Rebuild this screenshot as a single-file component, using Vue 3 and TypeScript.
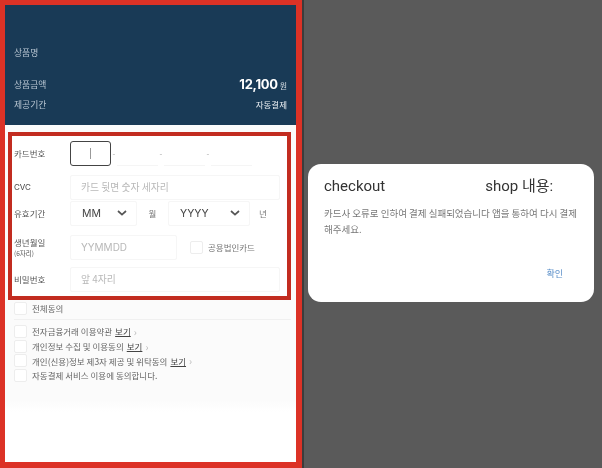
<script setup lang="ts">
interface Term { text: string; link: boolean }
const terms: Term[] = [
  { text: '전자금융거래 이용약관', link: true },
  { text: '개인정보 수집 및 이용동의', link: true },
  { text: '개인(신용)정보 제3자 제공 및 위탁동의', link: true },
  { text: '자동결제 서비스 이용에 동의합니다.', link: false },
]
</script>

<template>
  <div class="screen">
    <section class="pay">
      <header class="summary">
        <div class="product">상품명</div>
        <div class="line price-line">
          <span>상품금액</span>
          <span class="price"><b>12,100</b> <small>원</small></span>
        </div>
        <div class="line period-line">
          <span>제공기간</span>
          <span class="auto">자동결제</span>
        </div>
      </header>

      <div class="form-frame">
        <div class="row card-row">
          <label class="lbl">카드번호</label>
          <div class="card-fields">
            <div class="card-cell focused"><i class="caret"></i></div>
            <span class="dash">-</span>
            <div class="card-cell"></div>
            <span class="dash">-</span>
            <div class="card-cell"></div>
            <span class="dash">-</span>
            <div class="card-cell"></div>
          </div>
        </div>
        <div class="row cvc-row">
          <label class="lbl cvc">CVC</label>
          <div class="field grow ph">카드 뒷면 숫자 세자리</div>
        </div>
        <div class="row exp-row">
          <label class="lbl">유효기간</label>
          <div class="field select mm">
            <span>MM</span>
            <svg width="10" height="6" viewBox="0 0 10 6"><path d="M1 1l4 3.6L9 1" fill="none" stroke="#555" stroke-width="1.7" /></svg>
          </div>
          <span class="unit u1">월</span>
          <div class="field select yy">
            <span>YYYY</span>
            <svg width="10" height="6" viewBox="0 0 10 6"><path d="M1 1l4 3.6L9 1" fill="none" stroke="#555" stroke-width="1.7" /></svg>
          </div>
          <span class="unit u2">년</span>
        </div>
        <div class="row birth-row">
          <label class="lbl two">생년월일<br /><small>(6자리)</small></label>
          <div class="field birth ph">YYMMDD</div>
          <span class="box corp-box"></span>
          <span class="corp">공용법인카드</span>
        </div>
        <div class="row pw-row">
          <label class="lbl">비밀번호</label>
          <div class="field grow ph">앞 4자리</div>
        </div>
      </div>

      <div class="agree">
        <div class="all">
          <span class="box"></span>
          <span>전체동의</span>
        </div>
        <div class="term" v-for="t in terms" :key="t.text">
          <span class="box"></span>
          <span>{{ t.text }}</span>
          <template v-if="t.link"><u>보기</u><em>›</em></template>
        </div>
      </div>
    </section>

    <section class="backdrop">
      <div class="dialog">
        <div class="title">
          <span>checkout</span>
          <span class="shop">shop 내용:</span>
        </div>
        <p class="msg">카드사 오류로 인하여 결제 실패되었습니다 앱을 통하여 다시 결제<br />해주세요.</p>
        <div class="actions"><span>확인</span></div>
      </div>
    </section>
  </div>
</template>

<style>
html, body { margin: 0; padding: 0; background: #5a5a5a; }
</style>

<style scoped>
.screen {
  width: 602px;
  height: 468px;
  display: flex;
  overflow: hidden;
  font-family: "Noto Sans CJK KR", "Noto Sans", sans-serif;
  filter: blur(0.55px);
}
.pay {
  width: 302px;
  height: 468px;
  flex: none;
  box-sizing: border-box;
  border: solid #dc3226;
  border-width: 5px 6px 6px 5px;
  background: linear-gradient(#fbfbfb 0, #fbfbfb 395px, #fff 407px);
  display: flex;
  flex-direction: column;
}
.summary {
  height: 120px;
  flex: none;
  box-sizing: border-box;
  background: #193a56;
  color: #b9c6d2;
  font-size: 8.8px;
  padding: 41px 9px 0 9px;
}
.product { line-height: 13px; }
.line {
  display: flex;
  justify-content: space-between;
  align-items: center;
}
.price-line { margin-top: 17px; height: 16px; }
.period-line { margin-top: 4px; height: 16px; }
.price { color: #fff; }
.price b { font: 700 13px Inter, sans-serif; letter-spacing: -0.3px; }
.price small { font-size: 8px; color: #d5dde4; }
.auto { color: #e8edf1; font-size: 8.5px; }

.form-frame {
  margin: 7px 5px 0 3px;
  flex: none;
  height: 168px;
  box-sizing: border-box;
  border: 4px solid #c22c20;
  background: #fff;
  padding: 0 0 0 2px;
  color: #555;
  display: flex;
  flex-direction: column;
}
.row {
  position: relative;
  display: flex;
  align-items: center;
  font-size: 8.5px;
}
.lbl { width: 56px; flex: none; color: #555; line-height: 10px; }
.lbl.cvc { font: 8px Inter, sans-serif; color: #444; }
.lbl small { font-size: 6.5px; }
.card-row { height: 26px; margin-top: 4px; }
.cvc-row { height: 26px; margin-top: 8px; }
.exp-row { height: 26px; margin-top: 0; }
.birth-row { height: 26px; margin-top: 8px; }
.pw-row { height: 26px; margin-top: 6px; }
.card-fields { display: flex; align-items: center; height: 25px; }
.card-cell { width: 41px; height: 25px; box-sizing: border-box; border-bottom: 1px solid #f5f5f5; }
.card-cell.focused {
  border: 1.5px solid #444;
  border-radius: 3px;
  display: flex;
  align-items: center;
  justify-content: center;
}
.caret { width: 1px; height: 11px; background: #999; }
.dash { width: 6px; color: #aaa; text-align: center; font-size: 8px; }
.field {
  height: 25px;
  box-sizing: border-box;
  border: 1px solid #f6f6f6;
  border-radius: 2px;
  display: flex;
  align-items: center;
  padding-left: 10px;
  background: #fff;
}
.grow { width: 210px; }
.ph { color: #b8b8b8; font-size: 9.8px; }
.select { justify-content: space-between; padding: 0 9px 0 11px; color: #444; font: 10.5px Inter, sans-serif; }
.mm { width: 67px; }
.yy { width: 82px; padding-left: 11px; }
.unit { color: #777; text-align: center; }
.u1 { width: 31px; }
.u2 { width: 26px; }
.birth { width: 107px; font-family: Inter, sans-serif; font-size: 10px; }
.box {
  width: 13px;
  height: 13px;
  flex: none;
  box-sizing: border-box;
  border: 1px solid #ededed;
  border-radius: 2px;
  background: #fff;
  display: inline-block;
}
.corp-box { margin-left: 13px; }
.corp { margin-left: 5px; color: #777; }

.agree { margin: 0 0 0 9px; width: 277px; font-size: 8.5px; color: #666; }
.all {
  display: flex;
  align-items: center;
  gap: 5px;
  height: 16px;
  padding-bottom: 3px;
  border-bottom: 1px solid #f0f0f0;
  margin-bottom: 4px;
}
.term {
  display: flex;
  align-items: center;
  height: 14.7px;
}
.term .box { margin-right: 5px; }
.term u { margin-left: 3px; color: #444; }
.term em { margin-left: 3px; color: #bbb; font-style: normal; font-size: 10px; }

.backdrop {
  flex: 1;
  box-sizing: border-box;
  border-left: 2px solid #3c3c3c;
  background: #5a5a5a;
  padding: 164px 4px 0 4px;
}
.dialog {
  width: 286px;
  height: 138px;
  box-sizing: border-box;
  background: #fff;
  border-radius: 13px;
  padding: 13px 16px 0;
}
.title {
  display: flex;
  font: 15px Roboto, "Noto Sans CJK KR", sans-serif;
  color: #333;
  line-height: 18px;
}
.title .shop { margin-left: 100px; }
.msg {
  margin: 10px 0 0;
  font-size: 9.5px;
  line-height: 16px;
  color: #777;
  white-space: nowrap;
}
.actions {
  margin-top: 30px;
  padding-right: 15px;
  display: flex;
  justify-content: flex-end;
  font-size: 9px;
  color: #5b8fc9;
}
</style>
